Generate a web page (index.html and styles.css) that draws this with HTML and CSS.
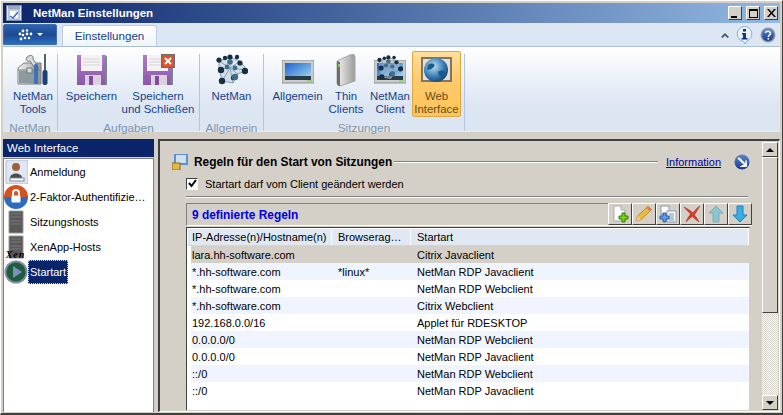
FILE: index.html
```html
<!DOCTYPE html>
<html lang="de">
<head>
<meta charset="utf-8">
<title>NetMan Einstellungen</title>
<link rel="stylesheet" href="styles.css">
</head>
<body>
<svg class="defs" width="0" height="0">
  <defs>
    <linearGradient id="purple" x1="0" y1="0" x2="0" y2="1"><stop offset="0" stop-color="#b07cc6"/><stop offset="1" stop-color="#8a56a8"/></linearGradient>
    <linearGradient id="screen" x1="0" y1="0" x2="1" y2="1"><stop offset="0" stop-color="#1e63d0"/><stop offset=".7" stop-color="#7fb6e6"/><stop offset="1" stop-color="#cfe4f2"/></linearGradient>
    <linearGradient id="silver" x1="0" y1="0" x2="1" y2="0"><stop offset="0" stop-color="#f2f2f2"/><stop offset="1" stop-color="#9a9a9a"/></linearGradient>
    <radialGradient id="globe" cx=".4" cy=".35" r=".7"><stop offset="0" stop-color="#bfe0f2"/><stop offset=".6" stop-color="#3a7fb8"/><stop offset="1" stop-color="#14406e"/></radialGradient>
    <linearGradient id="orb" x1="0" y1="0" x2="0" y2="1"><stop offset="0" stop-color="#5c86d0"/><stop offset="1" stop-color="#163a8c"/></linearGradient>
    <symbol id="floppy" viewBox="0 0 32 32">
      <path d="M1 1H29L31 3V31H1Z" fill="url(#purple)"/>
      <path d="M29 1L31 3V31H29Z" fill="#6f8a8a"/>
      <rect x="5" y="1" width="21" height="16" fill="#f4f2f4"/>
      <path d="M7 5H24M7 8H24M7 11H24" stroke="#d8d4da"/>
      <rect x="9" y="21" width="16" height="10" fill="#d9d2dc"/>
      <rect x="13" y="22" width="4" height="9" fill="#7f4c9e"/>
    </symbol>
    <symbol id="monitor" viewBox="0 0 32 26">
      <rect x="0" y="0" width="32" height="23" fill="#c9ccc8" stroke="#8e9190"/>
      <rect x="3" y="3" width="26" height="17" fill="url(#screen)"/>
      <rect x="3" y="16" width="26" height="4" fill="#2a3a4a"/>
      <rect x="25" y="20" width="5" height="2" fill="#8fdc6a"/>
    </symbol>
    <symbol id="net" viewBox="0 0 32 32">
      <path d="M3 7L14 3L24 7L31 16L22 20L17 29L6 27L3 15ZM14 3L14 14L22 20M3 15L14 14L24 7M14 14L17 29M6 27L14 14M3 7L14 14M31 16L14 14" stroke="#8aa0b4" stroke-width="1" fill="#b8c8d8" fill-opacity=".5"/>
      <g fill="#16303f">
        <circle cx="3" cy="6" r="2.600"/><circle cx="9" cy="4" r="2.200"/><circle cx="14" cy="3" r="2.600"/><circle cx="21" cy="3" r="2.200"/><circle cx="24" cy="9" r="2.600"/>
        <circle cx="5" cy="16" r="3.200"/><circle cx="29" cy="17" r="3.200"/><circle cx="6" cy="27" r="3.200"/><circle cx="17" cy="24" r="2.200"/>
      </g>
      <g fill="#3f6e86"><circle cx="14" cy="8" r="2.800"/><circle cx="11" cy="13" r="2.400"/><circle cx="19" cy="14" r="2.400"/><circle cx="19" cy="23" r="3.200"/></g>
    </symbol>
    <symbol id="server" viewBox="0 0 18 24">
      <path d="M2 1H16V23H2Z" fill="#585858" stroke="#9a9a9a"/>
      <path d="M4 4H14M4 7H14M4 11H14M4 14H14" stroke="#7a7a7a"/>
      <rect x="12" y="8" width="2" height="2" fill="#8c3a3a"/>
    </symbol>
  </defs>
</svg>
<div class="window">
  <header class="titlebar">
    <svg class="title-icon" width="16" height="16" viewBox="0 0 16 16"><rect x=".5" y=".5" width="15" height="15" fill="#dfe6ee" stroke="#7d8aa0"/><rect x="2" y="1" width="12" height="3" fill="#9aa8c0"/><rect x="3" y="5" width="10" height="9" fill="#fff" stroke="#8aa0c0"/><path d="M4 11L7 13L12 7" stroke="#2c6fc0" fill="none" stroke-width="1.500"/></svg>
    <span class="title-text">NetMan Einstellungen</span>
    <div class="win-buttons">
      <button class="win-btn"><span class="glyph-min"></span></button>
      <button class="win-btn"><span class="glyph-max"></span></button>
      <button class="win-btn glyph-close">
        <svg width="9" height="8" viewBox="0 0 9 8"><path d="M0 0H2L4.500 3L7 0H9L5.500 4L9 8H7L4.500 5L2 8H0L3.500 4Z" fill="#000"/></svg>
      </button>
    </div>
  </header>

  <nav class="tabrow">
    <button class="appbtn">
      <svg width="16" height="12" viewBox="0 0 16 12"><g fill="#fff"><circle cx="2" cy="5" r="1.400"/><circle cx="5" cy="2" r="1.400"/><circle cx="9" cy="1.500" r="1.200"/><circle cx="5" cy="6" r="1.300"/><circle cx="9" cy="5" r="1.400"/><circle cx="13" cy="5" r="1.400"/><circle cx="3" cy="10" r="1.400"/><circle cx="7" cy="9" r="1.300"/><circle cx="11" cy="9" r="1.200"/></g></svg>
      <span class="caret-down"></span>
    </button>
    <div class="tab">Einstellungen</div>
    <div class="tabrow-right">
      <svg class="collapse" width="8" height="5" viewBox="0 0 8 5"><path d="M0 4L4 0L8 4L6.500 5L4 2.500L1.500 5Z" fill="#42566e"/></svg>
      <svg width="17" height="18" viewBox="0 0 17 18"><path d="M8.500 .5A7.500 7.500 0 0 1 11 15L9 18L7.500 15.400A7.500 7.500 0 0 1 8.500 .5Z" fill="#eaf4fc" stroke="#7fb0dc"/><rect x="7" y="3" width="3" height="2.500" fill="#16308c"/><path d="M6 7H10V12H11.500V13.500H5.500V12H7V8.500H6Z" fill="#16308c"/></svg>
      <svg class="help" width="16" height="16" viewBox="0 0 16 16"><circle cx="8" cy="8" r="7.500" fill="#8a94a4"/><circle cx="8" cy="8" r="6" fill="url(#orb)"/><path d="M5.500 6C5.500 4 10.500 3.500 10.500 6.300C10.500 8 8.300 8 8.300 10" stroke="#fff" stroke-width="1.500" fill="none"/><rect x="7.500" y="11" width="1.600" height="1.600" fill="#fff"/></svg>
    </div>
  </nav>

  <section class="ribbon">
    <div class="rgroup rgroup-netman">
      <div class="rbuttons">
        <div class="rbtn rbtn-tools">
          <svg class="ricon" width="32" height="32" viewBox="0 0 32 32"><path d="M1 14L7 9H24L24 30H1Z" fill="url(#silver)" stroke="#7c7f80"/><path d="M1 16H24" stroke="#6e7476"/><rect x="2" y="17" width="21" height="12" fill="#8c9a9e"/><rect x="10" y="14" width="5" height="5" fill="#d8dcdc" stroke="#6e7476"/><path d="M10 3C14 0 17 2 16 5L22 14L19 16L13 7C10 8 8 6 10 3Z" fill="#d9dddd" stroke="#777"/><rect x="17" y="10" width="4" height="20" rx="1.500" fill="#3f6fb8"/><rect x="27" y="0" width="2" height="16" fill="#5b5f62"/><rect x="25.500" y="16" width="5" height="15" rx="2" fill="#1d3f78"/></svg>
          <span>NetMan<br>Tools</span>
        </div>
      </div>
      <div class="rlabel">NetMan</div>
    </div>
    <div class="rgroup rgroup-tasks">
      <div class="rbuttons">
        <div class="rbtn rbtn-save">
          <svg class="ricon" width="32" height="32"><use href="#floppy"/></svg>
          <span>Speichern</span>
        </div>
        <div class="rbtn rbtn-saveclose">
          <span class="iconwrap">
            <svg class="ricon" width="32" height="32"><use href="#floppy"/></svg>
            <span class="xbadge"><svg width="8" height="8" viewBox="0 0 8 8"><path d="M1 1L7 7M7 1L1 7" stroke="#fff" stroke-width="2"/></svg></span>
          </span>
          <span>Speichern<br>und Schließen</span>
        </div>
      </div>
      <div class="rlabel">Aufgaben</div>
    </div>
    <div class="rgroup rgroup-general">
      <div class="rbuttons">
        <div class="rbtn rbtn-net">
          <svg class="ricon" width="32" height="32"><use href="#net"/></svg>
          <span>NetMan</span>
        </div>
      </div>
      <div class="rlabel">Allgemein</div>
    </div>
    <div class="rgroup rgroup-sessions">
      <div class="rbuttons">
        <div class="rbtn rbtn-general">
          <svg class="ricon" width="32" height="26"><use href="#monitor"/></svg>
          <span>Allgemein</span>
        </div>
        <div class="rbtn rbtn-thin">
          <svg class="ricon" width="22" height="33" viewBox="0 0 22 33"><path d="M2 7L17 0Q20 0 20 3V27L5 32Q2 32 2 29Z" fill="url(#silver)" stroke="#a8a8a8"/><path d="M2 7L5 8V32Q2 32 2 29Z" fill="#6d6d6d"/><rect x="3" y="10" width="2" height="3" fill="#7ad04a"/></svg>
          <span>Thin<br>Clients</span>
        </div>
        <div class="rbtn rbtn-client">
          <span class="iconwrap">
            <svg class="ricon" width="32" height="26"><use href="#monitor"/></svg>
            <svg class="net-over" width="28" height="26" viewBox="0 0 32 32"><use href="#net"/></svg>
          </span>
          <span>NetMan<br>Client</span>
        </div>
        <div class="rbtn rbtn-web">
          <svg class="ricon" width="31" height="26" viewBox="0 0 31 26"><rect x="0" y="0" width="31" height="25" fill="#7f7468"/><rect x="2" y="2" width="27" height="21" fill="#e6e0d4"/><circle cx="15" cy="13" r="12" fill="url(#globe)"/><path d="M7 8C11 5 15 7 13 10C10 12 8 14 6 12ZM17 15C21 12 25 14 24 18C21 22 18 21 17 15Z" fill="#1d5a8e"/></svg>
          <span>Web<br>Interface</span>
        </div>
      </div>
      <div class="rlabel">Sitzungen</div>
    </div>
  </section>

  <main class="body">
    <aside class="sidebar">
      <h2 class="side-head">Web Interface</h2>
      <ul class="side-list">
        <li class="side-item">
          <svg class="side-icon" width="24" height="24" viewBox="0 0 24 24"><rect x="2" width="22" height="24" rx="2" fill="#dfe6f4" stroke="#b0bcd0"/><circle cx="12" cy="7" r="4" fill="#a0603c"/><path d="M6 18C6 12 18 12 18 18Z" fill="#4c4c4c"/><rect x="6" y="18" width="14" height="3" fill="#fff" stroke="#7d8aa0"/></svg>
          <span class="side-text">Anmeldung</span>
        </li>
        <li class="side-item">
          <svg class="side-icon" width="24" height="24" viewBox="0 0 24 24"><path d="M0 12A12 12 0 0 1 24 12Z" fill="#d8501e"/><path d="M0 12A12 12 0 0 0 24 12Z" fill="#2a6cc0"/><path d="M9 11V8A3 3 0 0 1 15 8V11" stroke="#fff" stroke-width="2" fill="none"/><rect x="7.500" y="10.500" width="9" height="7" rx="1" fill="#fff"/></svg>
          <span class="side-text">2-Faktor-Authentifizie…</span>
        </li>
        <li class="side-item">
          <svg class="side-icon side-icon-server" width="18" height="24"><use href="#server"/></svg>
          <span class="side-text">Sitzungshosts</span>
        </li>
        <li class="side-item">
          <span class="side-stack">
            <svg class="side-icon side-icon-server" width="18" height="24"><use href="#server"/></svg>
            <span class="xen">Xen</span>
          </span>
          <span class="side-text">XenApp-Hosts</span>
        </li>
        <li class="side-item">
          <svg class="side-icon" width="24" height="24" viewBox="0 0 24 24"><circle cx="12" cy="12" r="11.500" fill="#7d8ca8"/><circle cx="12" cy="12" r="9.500" fill="#1f5c3c"/><path d="M9 6L18 12L9 18Z" fill="#7f90c0"/></svg>
          <span class="side-text side-selected">Startart</span>
        </li>
      </ul>
    </aside>

    <div class="content">
      <div class="panel">
        <div class="head-row">
          <svg class="head-icon" width="16" height="16" viewBox="0 0 16 16"><rect x="2" y="0" width="14" height="11" fill="#5e8fd0"/><rect x="4" y="1" width="10" height="8" fill="#cfe0f2"/><rect x="0" y="9" width="8" height="7" fill="#e6b840" stroke="#8a6a10"/></svg>
          <h3 class="head-title">Regeln für den Start von Sitzungen</h3>
          <span class="etched head-rule"></span>
          <a class="info-link" href="#">Information</a>
          <svg class="info-arrow" width="16" height="16" viewBox="0 0 16 16"><circle cx="8" cy="8" r="7.500" fill="url(#orb)"/><path d="M4 4H5.500L12 10.500V6.500L12.500 12.500H6.500L10.500 11L4 4.500Z" fill="#fff" stroke="#fff"/></svg>
        </div>
        <label class="check-row">
          <span class="checkbox"><svg width="9" height="9" viewBox="0 0 9 9"><path d="M1 4L3.500 7L8 1" stroke="#000" stroke-width="2" fill="none"/></svg></span>
          <span>Startart darf vom Client geändert werden</span>
        </label>
        <div class="etched sep"></div>
        <div class="rules">
          <div class="rules-head">
            <span class="rules-title">9 definierte Regeln</span>
            <div class="toolbar">
              <button class="tool"><svg width="18" height="18" viewBox="0 0 18 18"><path d="M3 1H10L14 5V16H3Z" fill="#fff" stroke="#aaa"/><path d="M10 1V5H14" fill="#ddd" stroke="#aaa"/><path d="M11 8H14V11H17V14H14V17H11V14H8V11H11Z" fill="#7ad018" stroke="#2e7a0e"/></svg></button>
              <button class="tool"><svg width="18" height="18" viewBox="0 0 18 18"><path d="M1 16L2.500 11L13 1.500L16.500 4.500L6 14.500Z" fill="#eebc3c" stroke="#b88a20"/><path d="M13 1.500L16.500 4.500L15 6L11.500 3Z" fill="#e86a6a"/><path d="M1 16L2.500 11L6 14.500Z" fill="#e8c8a0"/></svg></button>
              <button class="tool"><svg width="18" height="18" viewBox="0 0 18 18"><rect x="2" y="1" width="8" height="8" fill="#fff" stroke="#8a9ab0"/><rect x="8" y="6" width="9" height="11" fill="#fff" stroke="#8a9ab0"/><path d="M10 9H15M10 11H15M10 13H15M10 15H15" stroke="#6a8ab0"/><path d="M1 11H4V8H7V11H10V14H7V17H4V14H1Z" fill="#5e9ce0" stroke="#2a5ca8"/></svg></button>
              <button class="tool"><svg width="18" height="18" viewBox="0 0 18 18"><path d="M1 2C5 4 8 6 10 8C12 5 14 3 17 1C15 4 13 7 11.500 10C13 12 15 14 16 17C13 15 11 13 9.500 11.500C7 13 5 15 3 17C4 14 6 11 7.500 9C6 7 3 5 1 2Z" fill="#d83a24" stroke="#a82818" stroke-width=".5"/></svg></button>
              <button class="tool"><svg width="16" height="18" viewBox="0 0 16 18"><path d="M8 1L15 8H11V17H5V8H1Z" fill="#8ec4d0" stroke="#78b0be"/></svg></button>
              <button class="tool"><svg width="16" height="18" viewBox="0 0 16 18"><path d="M8 17L15 10H11V1H5V10H1Z" fill="#38aee0" stroke="#1a80c0"/></svg></button>
            </div>
          </div>
          <div class="list">
            <div class="list-head">
              <div class="cell c1">IP-Adresse(n)/Hostname(n)</div>
              <div class="cell c2">Browserag…</div>
              <div class="cell c3">Startart</div>
            </div>
            <div class="row row-selected"><div class="cell c1">lara.hh-software.com</div><div class="cell c2"></div><div class="cell c3">Citrix Javaclient</div></div>
            <div class="row row-alt"><div class="cell c1">*.hh-software.com</div><div class="cell c2">*linux*</div><div class="cell c3">NetMan RDP Javaclient</div></div>
            <div class="row"><div class="cell c1">*.hh-software.com</div><div class="cell c2"></div><div class="cell c3">NetMan RDP Webclient</div></div>
            <div class="row row-alt"><div class="cell c1">*.hh-software.com</div><div class="cell c2"></div><div class="cell c3">Citrix Webclient</div></div>
            <div class="row"><div class="cell c1">192.168.0.0/16</div><div class="cell c2"></div><div class="cell c3">Applet für RDESKTOP</div></div>
            <div class="row row-alt"><div class="cell c1">0.0.0.0/0</div><div class="cell c2"></div><div class="cell c3">NetMan RDP Webclient</div></div>
            <div class="row"><div class="cell c1">0.0.0.0/0</div><div class="cell c2"></div><div class="cell c3">NetMan RDP Javaclient</div></div>
            <div class="row row-alt"><div class="cell c1">::/0</div><div class="cell c2"></div><div class="cell c3">NetMan RDP Webclient</div></div>
            <div class="row"><div class="cell c1">::/0</div><div class="cell c2"></div><div class="cell c3">NetMan RDP Javaclient</div></div>
          </div>
        </div>
      </div>
      <div class="scrollbar">
        <button class="sb-btn"><span class="tri-up"></span></button>
        <div class="sb-thumb"></div>
        <div class="sb-track"></div>
        <button class="sb-btn"><span class="tri-down"></span></button>
      </div>
    </div>
  </main>
</div>
</body>
</html>
```

FILE: styles.css
```css
* { box-sizing: border-box; }
html, body { margin: 0; padding: 0; height: 415px; overflow: hidden; }
body { font-family: "Liberation Sans", Arial, sans-serif; font-size: 11px; color: #000; background: #d4d0c8; }
.defs { display: block; height: 0; }
button { font: inherit; padding: 0; margin: 0; }

.window { width: 783px; height: 415px; display: flex; flex-direction: column; background: #d4d0c8; border-bottom: 2px solid #404040; border-right: 1px solid #404040; border-top: 1px solid #fff; border-left: 1px solid #fff; padding: 2px 2px 1px 2px; }

.titlebar { height: 20px; flex: none; display: flex; align-items: center; background: linear-gradient(90deg, #0a246a 0, #93b8e2 100%); padding: 0 2px; color: #fff; }
.title-icon { flex: none; margin-right: 11px; margin-left: 1px; }
.title-text { font-weight: 700; font-size: 11.500px; flex: 1; }
.win-buttons { display: flex; gap: 4px; }
.win-btn { width: 14px; height: 14px; background: #d4d0c8; border: 1px solid; border-color: #fff #404040 #404040 #fff; display: flex; align-items: center; justify-content: center; position: relative; }
.glyph-min { display: block; width: 6px; height: 2px; background: #000; margin-top: 7px; margin-right: 2px; }
.glyph-max { display: block; width: 9px; height: 9px; border: 1px solid #000; border-top-width: 2px; }

.tabrow { height: 23px; flex: none; display: flex; align-items: flex-end; background: #dde7f3; }
.appbtn { width: 54px; height: 21px; margin: 0 5px 1px 0; border: 1px solid #3d6eb0; border-radius: 2px 2px 0 0; background: linear-gradient(#2f62ae 0, #1c4a94 50%, #2a6cc0 100%); display: flex; align-items: center; justify-content: center; gap: 3px; }
.caret-down { width: 0; height: 0; border: 3px solid transparent; border-top-color: #fff; border-bottom: 0; }
.tab { width: 95px; height: 21px; background: linear-gradient(#fff, #eff5fb); border: 1px solid #b9cde4; border-bottom: 0; border-radius: 3px 3px 0 0; text-align: center; font-size: 11.600px; line-height: 19px; color: #15428b; }
.tabrow-right { margin-left: auto; display: flex; align-items: center; gap: 7px; height: 22px; padding-right: 4px; }

.ribbon { height: 86px; flex: none; display: flex; align-items: stretch; background: linear-gradient(#fff 0, #dce6f3 70%, #dce6f3 100%); border-top: 1px solid #a9bfdc; border-bottom: 1px solid #e8eef6; }
.rgroup { display: flex; flex-direction: column; border-right: 1px solid #b4c6dc; margin: 7px 0 0; height: 77px; }
.rgroup-netman { width: 55px; }
.rgroup-tasks { width: 142px; }
.rgroup-general { width: 64px; }
.rgroup-sessions { width: 201px; }
.rbuttons { flex: 1; display: flex; min-height: 0; }
.rlabel { height: 9px; line-height: 13px; text-align: center; font-size: 11.800px; color: #7f94ac; }
.rbtn { display: flex; flex-direction: column; align-items: center; text-align: center; color: #15428b; font-size: 11.400px; line-height: 13px; padding-top: 0; flex: none; white-space: nowrap; }
.rbtn .ricon, .iconwrap { margin-bottom: 4px; }
.iconwrap { display: block; position: relative; height: 32px; }
.iconwrap .ricon { margin-bottom: 0; display: block; }
.rbtn-tools { width: 50px; margin-left: 5px; }
.rbtn-save { width: 51px; margin-left: 8px; }
.rbtn-saveclose { width: 72px; margin-left: 5px; }
.rbtn-net { width: 63px; }
.rbtn-general { width: 51px; margin-left: 8px; }
.rbtn-thin { width: 34px; margin-left: 6px; }
.rbtn-client { width: 40px; margin-left: 7px; }
.rbtn-general > .ricon { margin: 6px 0 4px; }
.rbtn-thin > .ricon { margin: 0 0 3px; }
.rbtn-client .iconwrap .ricon { margin-top: 6px; }
.net-over { position: absolute; left: 2px; top: 1px; }
.xbadge { position: absolute; right: -1px; top: 0; width: 14px; height: 14px; background: #d8542c; border: 1px solid #6a6a6a; display: flex; align-items: center; justify-content: center; }
.rbtn-web { width: 49px; height: 66px; margin-left: 2px; margin-top: -3px; padding-top: 5px; border: 1px solid #e2a63c; border-radius: 2px; background: linear-gradient(#ffdf9a 0, #ffc868 50%, #fcc65c 100%); color: #6b4a1c; }
.rbtn-web > .ricon { margin-bottom: 7px; }

.body { flex: 1; display: flex; padding-top: 7px; min-height: 0; }
.sidebar { width: 151px; flex: none; display: flex; flex-direction: column; }
.side-head { margin: 0; height: 18px; background: #0a246a; color: #fff; font-weight: 400; font-size: 11.500px; line-height: 18px; padding-left: 4px; }
.side-list { flex: 1; margin: 1px 0 0; padding: 0; list-style: none; background: #fff; border: 1px solid #808080; border-bottom: 0; }
.side-item { height: 25px; display: flex; align-items: center; }
.side-icon { display: block; flex: none; }
.side-icon-server { margin: 0 3px; }
.side-stack { position: relative; display: block; width: 24px; height: 24px; flex: none; }
.xen { position: absolute; left: 0; bottom: 0; width: 23px; height: 9px; color: #000; font-family: "Liberation Serif", serif; font-weight: 700; font-style: italic; font-size: 10px; letter-spacing: 1px; line-height: 9px; text-align: center; }
.side-text { margin-left: 2px; white-space: nowrap; }
.side-selected { background: #0a246a; color: #fff; outline: 1px dotted #d4d0c8; outline-offset: -1px; padding: 6px 2px; margin-left: 0; }

.content { flex: 1; display: flex; min-width: 0; margin-left: 4px; border: 1px solid; border-color: #404040 #fff #fff #404040; border-top-width: 2px; border-left-width: 2px; padding: 1px 1px 1px 0; }
.panel { flex: 1; min-width: 0; padding: 12px 14px 0 26px; display: flex; flex-direction: column; }
.head-row { display: flex; align-items: center; height: 16px; margin: 0 -4px 0 -14px; }
.head-icon { flex: none; margin-right: 6px; }
.head-title { margin: 0; font-size: 11.900px; font-weight: 700; white-space: nowrap; }
.etched { display: block; height: 2px; border-top: 1px solid #808080; border-bottom: 1px solid #fff; }
.head-rule { flex: 1; margin: 0 8px 0 2px; }
.info-link { color: #00009c; text-decoration: underline; margin-right: 13px; }
.info-arrow { flex: none; margin-right: 2px; }
.check-row { display: flex; align-items: center; gap: 7px; height: 13px; margin-top: 7px; }
.checkbox { width: 12px; height: 12px; background: #fff; border: 1px solid; border-color: #404040 #fff #fff #404040; display: flex; align-items: center; justify-content: center; }
.sep { margin-top: 6px; }
.rules { margin-top: 5px; flex: 1; display: flex; flex-direction: column; }
.rules-head { display: flex; align-items: center; justify-content: space-between; height: 23px; border-top: 1px solid #808080; border-left: 1px solid #808080; border-bottom: 1px solid #fff; padding-left: 5px; margin-right: -4px; }
.rules-title { color: #0000e8; font-weight: 700; font-size: 11.900px; }
.toolbar { display: flex; }
.tool { width: 24px; height: 22px; margin-top: -1px; background: #d4d0c8; border: 1px solid; border-color: #fff #404040 #404040 #fff; display: flex; align-items: center; justify-content: center; }
.list { flex: 1; margin: 1px -2px 0 0; background: #fff; border-top: 1px solid #404040; border-left: 1px solid #404040; border-right: 1px solid #d4d0c8; padding: 1px 0 0 1px; }
.list-head { display: flex; height: 17px; background: #dfe8f3; border-bottom: 1px solid #c8d6e6; }
.row { display: flex; height: 17px; margin-left: 3px; }
.row-alt { background: #eff4fe; }
.row-selected { background: #d4d0c8; }
.cell { line-height: 16px; white-space: nowrap; overflow: hidden; padding-left: 4px; }
.row .cell { line-height: 18px; height: 17px; }
.list-head .cell { border-right: 1px solid #fff; }
.c1 { width: 144px; }
.c2 { width: 79px; padding-left: 6px; }
.c3 { flex: 1; padding-left: 6px; }
.row .c1 { width: 141px; padding-left: 1px; }

.scrollbar { width: 16px; flex: none; display: flex; flex-direction: column; }
.sb-btn { height: 15px; flex: none; background: #d4d0c8; border: 1px solid; border-color: #fff #404040 #404040 #fff; display: flex; align-items: center; justify-content: center; }
.tri-up { width: 0; height: 0; border: 4px solid transparent; border-bottom-color: #000; border-top: 0; }
.tri-down { width: 0; height: 0; border: 4px solid transparent; border-top-color: #000; border-bottom: 0; }
.sb-thumb { height: 156px; flex: none; background: #d4d0c8; border: 1px solid; border-color: #fff #404040 #404040 #fff; }
.sb-track { flex: 1; background-color: #fff; background-image: conic-gradient(#d4d0c8 25%, #fff 0 50%, #d4d0c8 0 75%, #fff 0); background-size: 2px 2px; }
```
